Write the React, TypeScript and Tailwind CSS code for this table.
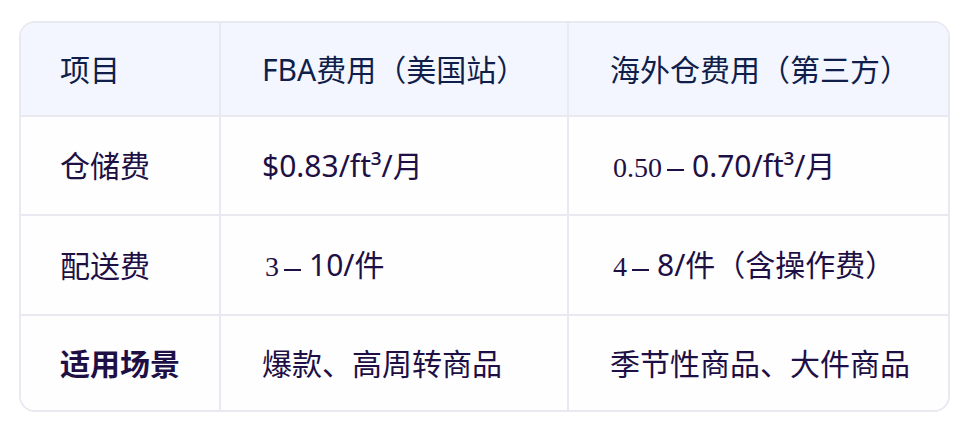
import React from 'react';

type Cell = React.ReactNode;

// math-rendered prefix like "3−" in a serif face
const Minus: React.FC<{ n: string }> = ({ n }) => (
  <span className="font-['Liberation_Serif','DejaVu_Serif',serif] text-[28px] pl-[3px]">
    {n}
    <span className="inline-block align-middle ml-[5px] mr-[8px] w-[17px] h-[2px] bg-current" />
  </span>
);

const header = ['项目', 'FBA费用（美国站）', '海外仓费用（第三方）'];

const rows: { h: string; cells: Cell[]; bold?: boolean }[] = [
  {
    h: 'h-[99px]',
    cells: [
      '仓储费',
      '$0.83/ft³/月',
      <>
        <Minus n="0.50" />
        0.70/ft³/月
      </>,
    ],
  },
  {
    h: 'h-[100px]',
    cells: [
      '配送费',
      <>
        <Minus n="3" />
        10/件
      </>,
      <>
        <Minus n="4" />
        8/件（含操作费）
      </>,
    ],
  },
  {
    h: 'h-[94px]',
    bold: true,
    cells: ['适用场景', '爆款、高周转商品', '季节性商品、大件商品'],
  },
];

const cols = 'grid grid-cols-[200px_348px_1fr]';

const App: React.FC = () => {
  return (
    <div className="w-[972px] h-[432px] bg-white pt-[21px] pl-[19px] font-['Noto_Sans','Noto_Sans_CJK_SC',sans-serif]">
      <div className="w-[931px] border-2 border-[#e9e9f2] rounded-[16px] overflow-hidden">
        {/* header */}
        <div className={`${cols} h-[94px] bg-[#f4f6ff] border-b-2 border-[#e9e9f2] text-[#0f1e4a]`}>
          {header.map((t, i) => (
            <div
              key={i}
              className={`flex items-center text-[30px] whitespace-nowrap ${i < 2 ? 'border-r-2 border-[#e9e9f2]' : ''} ${i === 0 ? 'pl-[39px]' : 'pl-[41px]'}`}
            >
              {t}
            </div>
          ))}
        </div>

        {rows.map((r, ri) => (
          <div
            key={ri}
            className={`${cols} ${r.h} bg-[#fefeff] text-[#1e1045] ${ri < rows.length - 1 ? 'border-b-2 border-[#e9e9f2]' : ''}`}
          >
            {r.cells.map((c, i) => (
              <div
                key={i}
                className={`flex items-center text-[30px] whitespace-nowrap ${i < 2 ? 'border-r-2 border-[#e9e9f2]' : ''} ${i === 0 ? 'pl-[39px]' : 'pl-[41px]'} ${r.bold && i === 0 ? 'font-bold' : ''}`}
              >
                <span>{c}</span>
              </div>
            ))}
          </div>
        ))}
      </div>
    </div>
  );
};

export default App;
